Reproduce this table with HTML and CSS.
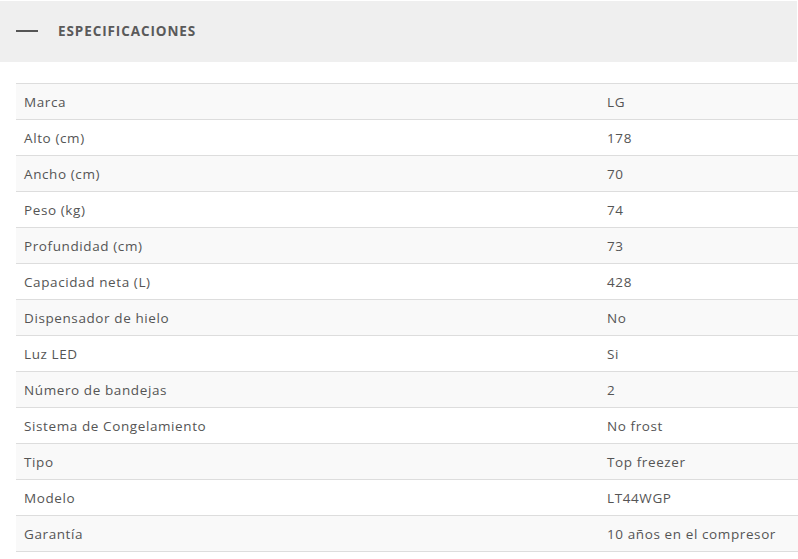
FILE: index.html
```html
<!DOCTYPE html>
<html lang="es">
<head>
<meta charset="utf-8">
<title>Especificaciones</title>
<link rel="stylesheet" href="styles.css">
</head>
<body>
<section class="specs">
  <div class="specs-header">
    <span class="dash"></span>
    <h2 class="specs-title">ESPECIFICACIONES</h2>
  </div>
  <div class="specs-body">
    <table class="spec-table">
      <tbody>
        <tr><td class="label">Marca</td><td class="value">LG</td></tr>
        <tr><td class="label">Alto (cm)</td><td class="value">178</td></tr>
        <tr><td class="label">Ancho (cm)</td><td class="value">70</td></tr>
        <tr><td class="label">Peso (kg)</td><td class="value">74</td></tr>
        <tr><td class="label">Profundidad (cm)</td><td class="value">73</td></tr>
        <tr><td class="label">Capacidad neta (L)</td><td class="value">428</td></tr>
        <tr><td class="label">Dispensador de hielo</td><td class="value">No</td></tr>
        <tr><td class="label">Luz LED</td><td class="value">Si</td></tr>
        <tr><td class="label">Número de bandejas</td><td class="value">2</td></tr>
        <tr><td class="label">Sistema de Congelamiento</td><td class="value">No frost</td></tr>
        <tr><td class="label">Tipo</td><td class="value">Top freezer</td></tr>
        <tr><td class="label">Modelo</td><td class="value">LT44WGP</td></tr>
        <tr><td class="label">Garantía</td><td class="value">10 años en el compresor</td></tr>
      </tbody>
    </table>
  </div>
</section>
</body>
</html>
```
FILE: styles.css
```css
* { box-sizing: border-box; }
html, body {
  margin: 0;
  padding: 0;
  background: #ffffff;
}
body {
  font-family: "Open Sans", "Noto Sans", "Liberation Sans", sans-serif;
  color: #555555;
  padding-top: 1px;
}
.specs-header {
  background: #efefef;
  height: 61px;
  display: flex;
  align-items: center;
  padding-left: 16px;
  padding-bottom: 1px;
  margin-right: 1px;
}
.dash {
  display: block;
  width: 22px;
  height: 2px;
  background: #555555;
  margin-right: 20px;
}
.specs-title {
  margin: 0;
  font-size: 13.5px;
  font-weight: 700;
  color: #5a5a5a;
  letter-spacing: 0.9px;
}
.specs-body {
  padding: 21px 0 0 16px;
}
.spec-table {
  width: 100%;
  border-collapse: collapse;
  font-size: 13.5px;
  letter-spacing: 0.6px;
  color: #555555;
}
.spec-table tr {
  height: 36px;
  border-top: 1px solid #dddddd;
  border-bottom: 1px solid #dddddd;
}
.spec-table tr:nth-child(odd) {
  background: #f9f9f9;
}
.spec-table td {
  padding: 0 8px;
  vertical-align: middle;
}
.spec-table .label {
  width: 583px;
}
```
